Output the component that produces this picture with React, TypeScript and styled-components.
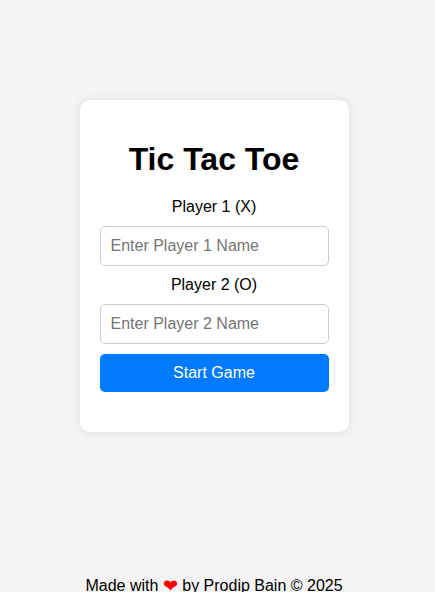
import React from "react";
import styled, { createGlobalStyle } from "styled-components";

const GlobalStyle = createGlobalStyle`
  body {
    margin: 0;
    background: #f4f4f4;
    color: #000;
    font-family: "Liberation Sans", Arial, sans-serif;
    font-size: 16px;
    overflow: hidden;
  }
`;

const Page = styled.div`
  width: 428px;
  height: 592px;
  display: flex;
  flex-direction: column;
  align-items: center;
  text-align: center;
  overflow: hidden;
`;

const Card = styled.form`
  box-sizing: border-box;
  flex: none;
  width: 269px;
  height: 332px;
  margin: 100px 0 0;
  padding: 20px;
  display: flex;
  flex-direction: column;
  background: #fff;
  border-radius: 10px;
  box-shadow: 0 0 10px rgba(0, 0, 0, 0.1);
`;

const Title = styled.h1`
  margin: 21px 0;
  font-size: 32px;
  line-height: 36px;
  font-weight: bold;
`;

const Label = styled.label`
  line-height: 18px;
`;

const NameInput = styled.input`
  box-sizing: border-box;
  width: 100%;
  height: 40px;
  margin: 10px 0;
  padding: 10px;
  border: 1px solid #ccc;
  border-radius: 5px;
  background: #fff;
  font: inherit;

  &::placeholder {
    color: #757575;
  }
`;

const StartButton = styled.button`
  width: 100%;
  height: 38px;
  padding: 10px;
  border: none;
  border-radius: 5px;
  background: #007bff;
  color: #fff;
  font: inherit;
  cursor: pointer;
`;

const Footer = styled.footer`
  flex: none;
  margin-top: 145px;
  line-height: 18px;
  white-space: nowrap;
`;

const Heart = styled.span`
  color: red;
  font-size: 18px;
  line-height: 1;
  vertical-align: -1px;
`;

export default function App() {
  return (
    <>
      <GlobalStyle />
      <Page>
        <Card onSubmit={(event) => event.preventDefault()}>
          <Title>Tic Tac Toe</Title>
          <Label htmlFor="player1">Player 1 (X)</Label>
          <NameInput id="player1" placeholder="Enter Player 1 Name" />
          <Label htmlFor="player2">Player 2 (O)</Label>
          <NameInput id="player2" placeholder="Enter Player 2 Name" />
          <StartButton type="submit">Start Game</StartButton>
        </Card>
        <Footer>
          Made with <Heart>❤</Heart> by Prodip Bain © 2025
        </Footer>
      </Page>
    </>
  );
}
